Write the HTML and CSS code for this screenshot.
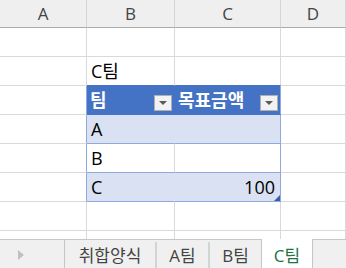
FILE: index.html
```html
<!DOCTYPE html>
<html lang="ko">
<head>
<meta charset="utf-8">
<link rel="stylesheet" href="styles.css">
</head>
<body>
<div class="app">
  <div class="sheet">
    <div class="row colhdr">
      <div class="c ca">A</div><div class="c cb">B</div><div class="c cc">C</div><div class="c cd">D</div>
    </div>
    <div class="row">
      <div class="c ca"></div><div class="c cb"></div><div class="c cc"></div><div class="c cd"></div>
    </div>
    <div class="row">
      <div class="c ca"></div><div class="c cb pre">C팀</div><div class="c cc pre"></div><div class="c cd"></div>
    </div>
    <div class="row">
      <div class="c ca tl"></div>
      <div class="c cb th"><span>팀</span><span class="dd"><i></i></span></div>
      <div class="c cc th tr"><span>목표금액</span><span class="dd"><i></i></span></div>
      <div class="c cd"></div>
    </div>
    <div class="row">
      <div class="c ca tl"></div><div class="c cb band">A</div><div class="c cc band tr"></div><div class="c cd"></div>
    </div>
    <div class="row">
      <div class="c ca tl"></div><div class="c cb plain">B</div><div class="c cc plain tr"></div><div class="c cd"></div>
    </div>
    <div class="row">
      <div class="c ca tl"></div><div class="c cb band last">C</div><div class="c cc band tr last num">100<b class="handle"></b></div><div class="c cd"></div>
    </div>
    <div class="row">
      <div class="c ca"></div><div class="c cb"></div><div class="c cc"></div><div class="c cd"></div>
    </div>
    <div class="row">
      <div class="c ca"></div><div class="c cb"></div><div class="c cc"></div><div class="c cd"></div>
    </div>
  </div>
  <div class="tabbar">
    <div class="nav"><span class="arrow"></span></div>
    <div class="tabs">
      <div class="tab t1">취합양식</div>
      <div class="tab t2">A팀</div>
      <div class="tab t3">B팀</div>
      <div class="tab active">C팀</div>
    </div>
    <div class="rest"></div>
  </div>
</div>
</body>
</html>
```
FILE: styles.css
```css
html, body {
  margin: 0;
  padding: 0;
  background: #ffffff;
}
body {
  font-family: "Open Sans", "Noto Sans CJK KR", sans-serif;
  color: #000;
}
.app {
  width: 346px;
  height: 268px;
  display: flex;
  flex-direction: column;
  overflow: hidden;
}
.sheet {
  height: 239px;
  overflow: hidden;
  flex: none;
}
.row {
  display: flex;
  height: 29px;
}
.c {
  box-sizing: border-box;
  height: 29px;
  flex: none;
  border-right: 1px solid #d9d9d9;
  border-bottom: 1px solid #d9d9d9;
  display: flex;
  align-items: flex-end;
  padding: 0 4px 1px 4px;
  font-size: 18px;
  line-height: 25px;
  white-space: nowrap;
}
.ca { width: 87px; }
.cb { width: 88px; }
.cc { width: 106px; }
.cd { flex: 1; }

.colhdr { height: 28px; }
.colhdr .c {
  height: 28px;
  background: #efefef;
  border-right-color: #d5d5d5;
  border-bottom-color: #ababab;
  justify-content: center;
  align-items: center;
  color: #444;
  font-size: 17px;
  padding: 0;
}

.pre { border-bottom-color: #4472c4; }
.tl { border-right-color: #8ea9db; }
.th {
  background: #4472c4;
  border-right-color: #4472c4;
  border-bottom-color: #4472c4;
  color: #fff;
  font-weight: bold;
  justify-content: space-between;
  padding-right: 2px;
  padding-left: 3px;
}
.th.tr { border-right-color: #8ea9db; }
.dd {
  box-sizing: border-box;
  width: 18px;
  height: 16px;
  margin-bottom: 2px;
  background: #f2f2f2;
  border: 1px solid #b0b0b0;
  display: flex;
  align-items: center;
  justify-content: center;
  align-self: flex-end;
}
.dd i {
  width: 0;
  height: 0;
  border-left: 4px solid transparent;
  border-right: 4px solid transparent;
  border-top: 4px solid #595959;
}
.band {
  background: #d9e1f2;
  border-bottom-color: #8ea9db;
  border-right-color: #d9e1f2;
}
.plain {
  border-bottom-color: #8ea9db;
}
.tr { border-right-color: #8ea9db; }
.num {
  justify-content: flex-end;
  padding-right: 5px;
  position: relative;
}
.handle {
  position: absolute;
  right: 0;
  bottom: 0;
  width: 0;
  height: 0;
  border-left: 6px solid transparent;
  border-bottom: 6px solid #3c5ea8;
}

.tabbar {
  flex: 1;
  display: flex;
  background: #f0f0f0;
  border-top: 1px solid #c6c6c6;
  box-sizing: border-box;
  position: relative;
}
.nav {
  width: 65px;
  border-right: 1px solid #c6c6c6;
  display: flex;
  align-items: center;
  padding-left: 18px;
  box-sizing: border-box;
  margin-bottom: 3px;
}
.arrow {
  width: 0;
  height: 0;
  border-top: 5px solid transparent;
  border-bottom: 5px solid transparent;
  border-left: 6px solid #c0c0c0;
}
.tabs {
  display: flex;
}
.tab {
  box-sizing: border-box;
  font-size: 17px;
  color: #444;
  display: flex;
  align-items: center;
  justify-content: center;
  padding-bottom: 2px;
  position: relative;
}
.t1 { width: 92px; border-right: 2px solid #d4d4d4; margin: 2px 0 3px 0; }
.t2 { width: 53px; border-right: 2px solid #d4d4d4; margin: 2px 0 3px 0; }
.t3 { width: 51px; margin: 2px 0 3px 0; }
.active {
  width: 52px;
  background: #fff;
  color: #217346;
  margin-top: -1px;
  border-left: 1px solid #c6c6c6;
  border-right: 1px solid #c6c6c6;
  border-bottom: 2px solid #217346;
  padding-bottom: 0;
}
.rest { flex: 1; }
```
